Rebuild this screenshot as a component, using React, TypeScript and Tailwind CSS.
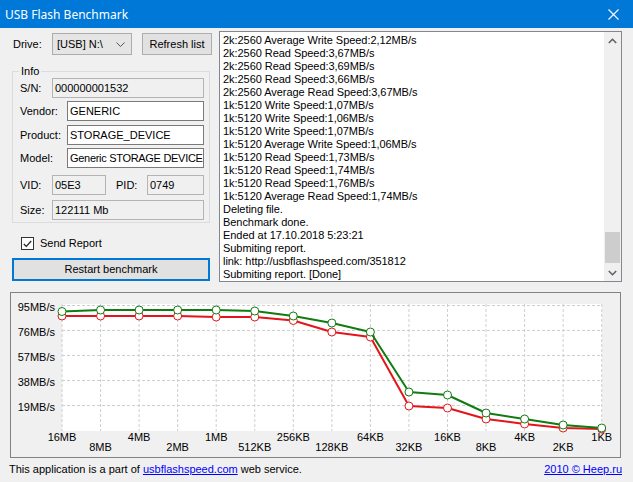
import React from 'react';

const logLines = [
  '2k:2560 Average Write Speed:2,12MB/s',
  '2k:2560 Read Speed:3,67MB/s',
  '2k:2560 Read Speed:3,69MB/s',
  '2k:2560 Read Speed:3,66MB/s',
  '2k:2560 Average Read Speed:3,67MB/s',
  '1k:5120 Write Speed:1,07MB/s',
  '1k:5120 Write Speed:1,06MB/s',
  '1k:5120 Write Speed:1,07MB/s',
  '1k:5120 Average Write Speed:1,06MB/s',
  '1k:5120 Read Speed:1,73MB/s',
  '1k:5120 Read Speed:1,74MB/s',
  '1k:5120 Read Speed:1,76MB/s',
  '1k:5120 Average Read Speed:1,74MB/s',
  'Deleting file.',
  'Benchmark done.',
  'Ended at 17.10.2018 5:23:21',
  'Submiting report.',
  'link: http://usbflashspeed.com/351812',
  'Submiting report. [Done]',
];

const sizes = ['16MB', '8MB', '4MB', '2MB', '1MB', '512KB', '256KB', '128KB', '64KB', '32KB', '16KB', '8KB', '4KB', '2KB', '1KB'];
const green = [311.5, 310, 310, 310, 310, 311, 316, 323, 332, 392, 395, 413, 419, 425, 428];
const red = [316, 316, 316, 316, 317, 317, 320.5, 332, 337, 406, 408, 419, 424, 428, 429];
const xAt = (i: number) => 62 + i * 38.55;
const yLabels = ['95MB/s', '76MB/s', '57MB/s', '38MB/s', '19MB/s'];

function Series({ ys, color }: { ys: number[]; color: string }) {
  const pts = ys.map((y, i) => `${xAt(i)},${y}`).join(' ');
  return (
    <g>
      <polyline points={pts} fill="none" stroke={color} strokeWidth="2" strokeLinejoin="round" />
      {ys.map((y, i) => (
        <circle key={i} cx={xAt(i)} cy={y} r="4" fill="#fff" stroke={color} strokeWidth="1" />
      ))}
    </g>
  );
}

function Chart() {
  return (
    <svg width="609" height="164" viewBox="11 293 609 164" className="block">
      <rect x="62" y="304" width="540" height="127" fill="#fff" />
      {sizes.map((_, i) => (
        <line key={i} x1={xAt(i)} y1="304" x2={xAt(i)} y2="431" stroke="#cfcfcf" strokeDasharray="3 2" strokeWidth="1" />
      ))}
      {[305.5, 330.5, 355.5, 380.5, 405.5].map((y) => (
        <line key={y} x1="62" y1={y} x2="602" y2={y} stroke="#cfcfcf" strokeDasharray="3 2" strokeWidth="1" />
      ))}
      {yLabels.map((t, i) => (
        <text key={t} x="55" y={311 + i * 25} textAnchor="end" fontSize="11" fontFamily="Liberation Sans, Arial, sans-serif" fill="#000">
          {t}
        </text>
      ))}
      {sizes.map((t, i) => (
        <text key={t} x={xAt(i)} y={i % 2 === 0 ? 441 : 451} textAnchor="middle" fontSize="11" fontFamily="Liberation Sans, Arial, sans-serif" fill="#000">
          {t}
        </text>
      ))}
      <Series ys={red} color="#e3151a" />
      <Series ys={green} color="#107c10" />
    </svg>
  );
}

function Field({ value, readOnly, className }: { value: string; readOnly?: boolean; className: string }) {
  return (
    <div
      className={`h-[20px] flex items-center pl-[2px] overflow-hidden whitespace-nowrap border ${
        readOnly ? 'bg-[#f0f0f0] border-[#b4b4b4]' : 'bg-white border-[#7a7a7a]'
      } ${className}`}
    >
      {value}
    </div>
  );
}

export default function App() {
  return (
    <div className="w-[633px] h-[482px] bg-[#f0f0f0] flex flex-col overflow-hidden text-[11px] leading-[13px] text-black font-['Liberation_Sans',Arial,sans-serif]">
      {/* title bar */}
      <div className="h-[28px] bg-[#0078d7] text-white flex items-center justify-between pl-[5px] pr-[14px] text-[12px] font-['Noto_Sans',sans-serif]">
        <span>USB Flash Benchmark</span>
        <svg width="11" height="11" viewBox="0 0 11 11">
          <path d="M0.5 0.5 L10.5 10.5 M10.5 0.5 L0.5 10.5" stroke="#fff" strokeWidth="1.1" />
        </svg>
      </div>

      <div className="flex pl-[12px] pt-[3px]">
        {/* left column */}
        <div className="w-[200px] flex flex-col">
          <div className="flex items-center mt-[2px] h-[22px]">
            <span className="w-[40px] pl-[1px]">Drive:</span>
            <div className="w-[80px] h-[22px] bg-[#e5e5e5] border border-[#acacac] flex items-center justify-between pl-[4px] pr-[6px]">
              <span>[USB] N:\</span>
              <svg width="9" height="5" viewBox="0 0 9 5">
                <path d="M0.5 0.5 L4.5 4.5 L8.5 0.5" fill="none" stroke="#555" strokeWidth="1" />
              </svg>
            </div>
            <div className="ml-[10px] w-[70px] h-[22px] bg-[#e1e1e1] border border-[#adadad] flex items-center justify-center">
              Refresh list
            </div>
          </div>

          <div className="relative mt-[16px] w-[198px] h-[152px] border border-[#dcdcdc] pl-[7px] pr-[5px]">
            <span className="absolute -top-[7px] left-[6px] px-[2px] bg-[#f0f0f0]">Info</span>
            <div className="flex items-center mt-[6px]">
              <span className="w-[32px]">S/N:</span>
              <Field value="000000001532" readOnly className="flex-1" />
            </div>
            <div className="flex items-center mt-[3px]">
              <span className="w-[47px]">Vendor:</span>
              <Field value="GENERIC" className="flex-1" />
            </div>
            <div className="flex items-center mt-[4px]">
              <span className="w-[47px]">Product:</span>
              <Field value="STORAGE_DEVICE" className="flex-1" />
            </div>
            <div className="flex items-center mt-[3px]">
              <span className="w-[47px]">Model:</span>
              <Field value="Generic STORAGE DEVICE" className="flex-1 tracking-[-0.3px]" />
            </div>
            <div className="flex items-center mt-[7px]">
              <span className="w-[32px]">VID:</span>
              <Field value="05E3" readOnly className="w-[54px]" />
              <span className="ml-[10px] w-[31px]">PID:</span>
              <Field value="0749" readOnly className="flex-1" />
            </div>
            <div className="flex items-center mt-[5px]">
              <span className="w-[32px]">Size:</span>
              <Field value="122111 Mb" readOnly className="flex-1" />
            </div>
          </div>

          <div className="flex items-center mt-[14px] ml-[9px] h-[13px]">
            <div className="w-[13px] h-[13px] bg-white border border-[#333] flex items-center justify-center">
              <svg width="9" height="8" viewBox="0 0 9 8">
                <path d="M0.8 4 L3.3 6.5 L8.2 1" fill="none" stroke="#222" strokeWidth="1.2" />
              </svg>
            </div>
            <span className="ml-[6px]">Send Report</span>
          </div>

          <div className="mt-[8px] w-[198px] h-[23px] bg-[#e1e1e1] border-2 border-[#0078d7] flex items-center justify-center">
            Restart benchmark
          </div>
        </div>

        {/* log */}
        <div className="ml-[7px] w-[403px] h-[251px] bg-white border border-[#828790] flex">
          <div className="flex-1 pl-[3px] pt-[2px] overflow-hidden whitespace-nowrap tracking-[-0.05px]">
            {logLines.map((l, i) => (
              <div key={i} className="h-[13px]">{l}</div>
            ))}
          </div>
          <div className="w-[17px] bg-[#f0f0f0] flex flex-col">
            <div className="h-[17px] flex items-center justify-center">
              <svg width="9" height="6" viewBox="0 0 9 6">
                <path d="M0.8 5 L4.5 1.3 L8.2 5" fill="none" stroke="#606060" strokeWidth="1.6" />
              </svg>
            </div>
            <div className="flex-1 flex flex-col justify-end pb-[1px]">
              <div className="mx-[1px] h-[31px] bg-[#cdcdcd]" />
            </div>
            <div className="h-[17px] flex items-center justify-center">
              <svg width="9" height="6" viewBox="0 0 9 6">
                <path d="M0.8 1 L4.5 4.7 L8.2 1" fill="none" stroke="#606060" strokeWidth="1.6" />
              </svg>
            </div>
          </div>
        </div>
      </div>

      {/* chart */}
      <div className="mt-[10px] ml-[10px] w-[611px] h-[166px] border border-[#828282]">
        <Chart />
      </div>

      {/* footer */}
      <div className="flex items-center justify-between pl-[9px] pr-[11px] h-[20px] mt-[1px]">
        <span>
          This application is a part of <span className="text-[#0000ff] underline">usbflashspeed.com</span> web service.
        </span>
        <span className="text-[#0000ff] underline">2010 © Heep.ru</span>
      </div>
    </div>
  );
}
